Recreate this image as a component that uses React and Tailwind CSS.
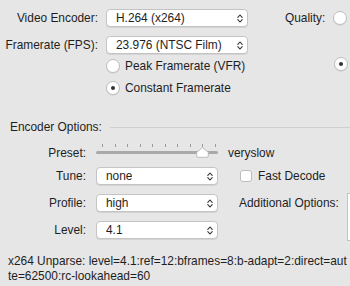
import React from 'react';

function Chevrons() {
  return (
    <svg width="6" height="9" viewBox="0 0 6 9" className="shrink-0">
      <path d="M0.8 3.4 L3 1 L5.2 3.4 M0.8 5.6 L3 8 L5.2 5.6" fill="none" stroke="#333" strokeWidth="1.1" strokeLinecap="round" strokeLinejoin="round" />
    </svg>
  );
}

function Popup({ value, className = '' }) {
  return (
    <div className={`h-[18px] shrink-0 bg-white border border-[#c4c4c4] rounded-[4px] shadow-[0_1px_0_rgba(0,0,0,0.08)] flex items-center justify-between pl-[9px] pr-[4px] ${className}`}>
      <span className="truncate">{value}</span>
      <Chevrons />
    </div>
  );
}

function Radio({ checked }) {
  return (
    <div className="w-[14px] h-[14px] shrink-0 rounded-full bg-white border border-[#bdbdbd] shadow-[0_1px_0_rgba(0,0,0,0.06)] flex items-center justify-center">
      {checked && <div className="w-[4px] h-[4px] rounded-full bg-[#333]" />}
    </div>
  );
}

function Slider() {
  const ticks = [0, 1, 2, 3, 4, 5, 6, 7, 8, 9];
  return (
    <div className="relative w-[122px] h-[16px]">
      {ticks.map((i) => (
        <div key={i} className="absolute top-0 w-px h-[3px] bg-[#9a9a9a]" style={{ left: 6 + i * 12.5 }} />
      ))}
      <div className="absolute left-0 right-0 top-[7px] h-[3px] rounded-full bg-[#a9a9a9]" />
      <svg className="absolute top-[3px]" style={{ left: 100 }} width="13" height="11" viewBox="0 0 13 11">
        <path d="M6.5 0.7 L12.3 5.2 L12.3 9 Q12.3 10.3 11 10.3 L2 10.3 Q0.7 10.3 0.7 9 L0.7 5.2 Z" fill="#fff" stroke="#b5b5b5" strokeWidth="0.9" />
      </svg>
    </div>
  );
}

export default function App() {
  return (
    <div className="w-[350px] h-[286px] overflow-hidden bg-[#e6e6e6] text-[#1e1e1e] text-[11.9px] leading-[14px]" style={{ fontFamily: '"Liberation Sans", Arial, sans-serif' }}>
      {/* top section */}
      <div className="pt-[9px]">
        <div className="flex items-center h-[18px]">
          <div className="w-[98px] text-right shrink-0 whitespace-nowrap">Video Encoder:</div>
          <Popup value="H.264 (x264)" className="ml-[8px] w-[142px]" />
          <div className="ml-[37px] whitespace-nowrap">Quality:</div>
          <div className="ml-[8px]"><Radio /></div>
        </div>
        <div className="flex items-center h-[18px] mt-[9px]">
          <div className="w-[98px] text-right shrink-0 whitespace-nowrap">Framerate (FPS):</div>
          <Popup value="23.976 (NTSC Film)" className="ml-[8px] w-[142px]" />
        </div>
        <div className="flex items-center h-[14px] mt-[5px]">
          <div className="ml-[106px]"><Radio /></div>
          <div className="ml-[5px]">Peak Framerate (VFR)</div>
          <div className="ml-auto mr-[2px] -mt-[5px]"><Radio checked /></div>
        </div>
        <div className="flex items-center h-[14px] mt-[8px]">
          <div className="ml-[106px]"><Radio checked /></div>
          <div className="ml-[5px]">Constant Framerate</div>
        </div>
      </div>

      {/* encoder options */}
      <div className="flex items-center mt-[25px] h-[14px]">
        <div className="ml-[10px]">Encoder Options:</div>
        <div className="flex-1 ml-[8px] h-px bg-[#cfcfcf]" />
      </div>

      <div className="mt-[11px]">
        <div className="flex items-center h-[16px]">
          <div className="w-[86px] text-right shrink-0">Preset:</div>
          <div className="ml-[10px] -mt-[2px] shrink-0"><Slider /></div>
          <div className="ml-[10px]">veryslow</div>
        </div>
        <div className="flex items-center h-[18px] mt-[6px]">
          <div className="w-[86px] text-right shrink-0">Tune:</div>
          <Popup value="none" className="ml-[10px] w-[122px]" />
          <div className="ml-[22px] w-[12px] h-[12px] shrink-0 rounded-[3px] bg-white border border-[#bdbdbd]" />
          <div className="ml-[6px] whitespace-nowrap">Fast Decode</div>
        </div>
        <div className="flex items-center h-[18px] mt-[9px]">
          <div className="w-[86px] text-right shrink-0">Profile:</div>
          <Popup value="high" className="ml-[10px] w-[122px]" />
          <div className="ml-[21px] whitespace-nowrap">Additional Options:</div>
          <div className="ml-[8px] self-start -mt-px w-[40px] h-[48px] bg-white border border-[#c4c4c4] shrink-0" />
        </div>
        <div className="flex items-center h-[18px] mt-[9px]">
          <div className="w-[86px] text-right shrink-0">Level:</div>
          <Popup value="4.1" className="ml-[10px] w-[122px]" />
        </div>
      </div>

      <div className="mt-[15px] pl-[8px] leading-[15px] whitespace-nowrap">
        <div>x264 Unparse: level=4.1:ref=12:bframes=8:b-adapt=2:direct=aut</div>
        <div>te=62500:rc-lookahead=60</div>
      </div>
    </div>
  );
}
